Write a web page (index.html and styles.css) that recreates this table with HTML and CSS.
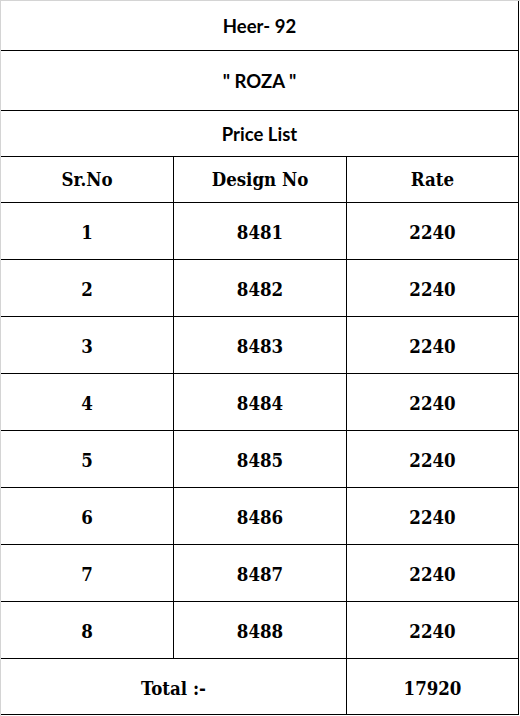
FILE: index.html
```html
<!DOCTYPE html>
<html>
<head>
<meta charset="utf-8">
<link rel="stylesheet" href="styles.css">
</head>
<body>
<div class="sheet">
  <div class="grid">
    <div class="cell title full r1">Heer- 92</div>
    <div class="cell title full r2">" ROZA "</div>
    <div class="cell title full r3">Price List</div>

    <div class="cell head">Sr.No</div>
    <div class="cell head">Design No</div>
    <div class="cell head">Rate</div>

    <div class="cell data">1</div><div class="cell data">8481</div><div class="cell data">2240</div>
    <div class="cell data">2</div><div class="cell data">8482</div><div class="cell data">2240</div>
    <div class="cell data">3</div><div class="cell data">8483</div><div class="cell data">2240</div>
    <div class="cell data">4</div><div class="cell data">8484</div><div class="cell data">2240</div>
    <div class="cell data">5</div><div class="cell data">8485</div><div class="cell data">2240</div>
    <div class="cell data">6</div><div class="cell data">8486</div><div class="cell data">2240</div>
    <div class="cell data">7</div><div class="cell data">8487</div><div class="cell data">2240</div>
    <div class="cell data">8</div><div class="cell data">8488</div><div class="cell data">2240</div>

    <div class="cell total span2">Total :-</div>
    <div class="cell total">17920</div>
  </div>
</div>
</body>
</html>
```

FILE: styles.css
```css
* {
  box-sizing: border-box;
}

html, body {
  margin: 0;
  padding: 0;
  background: #ffffff;
}

.sheet {
  width: 520px;
  height: 716px;
  border-top: 1px solid #d4d4d4;
  border-left: 1px solid #d4d4d4;
  background: #ffffff;
}

.grid {
  display: grid;
  grid-template-columns: 173px 173px 172px;
  grid-template-rows: 50px 60px 46px 46px repeat(8, 57px) 56px;
}

.cell {
  display: flex;
  align-items: center;
  justify-content: center;
  border-right: 1px solid #000;
  border-bottom: 1px solid #000;
  color: #000;
  font-weight: bold;
}

.full {
  grid-column: 1 / 4;
}

.span2 {
  grid-column: 1 / 3;
}

.title {
  font-family: "Lato", "Open Sans", sans-serif;
  font-size: 18.5px;
}

.head,
.data,
.total {
  font-family: "DejaVu Serif Condensed", "DejaVu Serif", serif;
  font-stretch: condensed;
  font-size: 18.5px;
}

.data,
.total {
  padding-top: 3px;
}
```
